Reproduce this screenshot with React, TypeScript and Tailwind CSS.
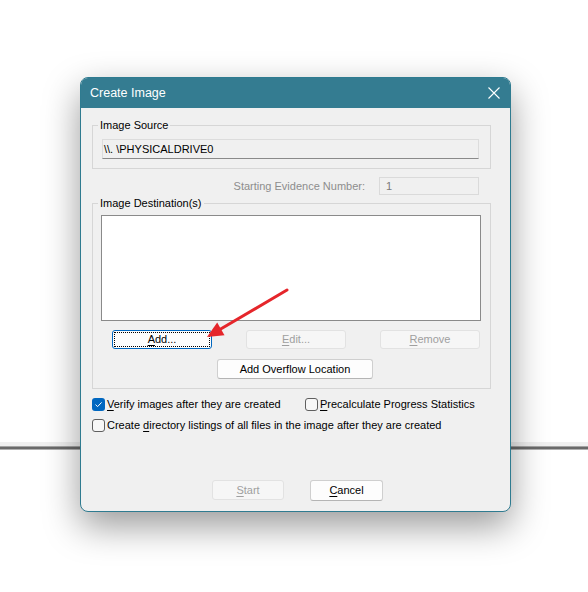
import React from "react";

const font = { fontFamily: '"Liberation Sans", Arial, sans-serif' };

function Mnemonic({ text, index }: { text: string; index: number }) {
  return (
    <>
      {text.slice(0, index)}
      <span className="underline underline-offset-[2px] decoration-[1px]">{text[index]}</span>
      {text.slice(index + 1)}
    </>
  );
}

function Button({
  children,
  disabled,
  focused,
  className = "",
}: {
  children: React.ReactNode;
  disabled?: boolean;
  focused?: boolean;
  className?: string;
}) {
  const base =
    "relative flex items-center justify-center rounded-[3px] border text-[11px] leading-none";
  const look = disabled
    ? "bg-[#f6f6f6] border-[#e2e2e2] text-[#9f9f9f]"
    : focused
    ? "bg-[#fdfdfd] border-[#0067c0] text-black"
    : "bg-[#fdfdfd] border-[#cfcfcf] border-b-[#b4b4b4] text-black";
  return (
    <div className={`${base} ${look} ${className}`}>
      {focused && (
        <div className="absolute inset-[1px] border border-dotted border-black" />
      )}
      <span className="relative">{children}</span>
    </div>
  );
}

function Checkbox({ checked }: { checked?: boolean }) {
  if (checked) {
    return (
      <div className="w-[13px] h-[13px] rounded-[3px] bg-[#0067c0] flex items-center justify-center shrink-0">
        <svg width="9" height="9" viewBox="0 0 9 9">
          <path d="M1.5 4.6 L3.6 6.6 L7.6 2.4" fill="none" stroke="white" strokeWidth="1" />
        </svg>
      </div>
    );
  }
  return (
    <div className="w-[13px] h-[13px] rounded-[3px] border border-[#5f5f5f] bg-[#f7f7f7] shrink-0" />
  );
}

function Dialog() {
  return (
    <div
      className="w-[431px] h-[435px] rounded-[8px] border border-[#2f7b90] bg-[#f0f0f0] overflow-hidden flex flex-col shadow-[0_14px_36px_rgba(0,0,0,0.4)]"
      style={font}
    >
      {/* title bar */}
      <div className="h-[30px] bg-[#347c91] flex items-center justify-between pl-[9px] pr-[10px] text-white text-[12.5px] shrink-0">
        <span>Create Image</span>
        <svg width="12" height="12" viewBox="0 0 12 12">
          <path d="M0.5 0.5 L11.5 11.5 M11.5 0.5 L0.5 11.5" stroke="white" strokeWidth="1.1" />
        </svg>
      </div>

      {/* client area */}
      <div className="flex-1 flex flex-col pl-[11px] text-[11px] leading-[13px] text-black">
        <fieldset className="mt-[11px] w-[399px] border border-[#d6d6d6] pt-[7px] pb-[9px]">
          <legend className="ml-[5px] px-[2px] text-[11px] leading-[13px]">Image Source</legend>
          <div className="ml-[9px] w-[377px] h-[20px] bg-[#f0f0f0] border border-[#dcdcdc] border-b-[#8a8a8a] flex items-center pl-[1px]">
            {"\\\\. \\PHYSICALDRIVE0"}
          </div>
        </fieldset>

        <div className="w-[399px] mt-[8px] flex items-center justify-end pr-[12px] gap-[14px]">
          <span className="text-[#8d8d8d]">Starting Evidence Number:</span>
          <div className="w-[100px] h-[18px] border border-[#dadada] bg-[#f0f0f0] flex items-center pl-[6px] text-[#7a7a7a]">
            1
          </div>
        </div>

        <fieldset className="mt-[2px] w-[399px] border border-[#d6d6d6] pt-[5px] pb-[9px]">
          <legend className="ml-[5px] px-[2px] text-[11px] leading-[13px]">Image Destination(s)</legend>
          <div className="ml-[8px] w-[380px] h-[106px] bg-white border border-[#8a8a8a]" />
          <div className="mt-[9px] flex pl-[19px] gap-[34px]">
            <Button focused className="w-[100px] h-[19px]">
              <Mnemonic text="Add..." index={0} />
            </Button>
            <Button disabled className="w-[100px] h-[19px]">
              <Mnemonic text="Edit..." index={0} />
            </Button>
            <Button disabled className="w-[100px] h-[19px]">
              <Mnemonic text="Remove" index={0} />
            </Button>
          </div>
          <div className="mt-[10px] pl-[124px] flex">
            <Button className="w-[156px] h-[20px]">Add Overflow Location</Button>
          </div>
        </fieldset>

        <div className="mt-[9px] flex items-center">
          <div className="w-[213px] flex items-center gap-[2px]">
            <Checkbox checked />
            <span>
              <Mnemonic text="Verify images after they are created" index={0} />
            </span>
          </div>
          <div className="flex items-center gap-[2px]">
            <Checkbox />
            <span>
              <Mnemonic text="Precalculate Progress Statistics" index={0} />
            </span>
          </div>
        </div>
        <div className="mt-[8px] flex items-center gap-[2px]">
          <Checkbox />
          <span>
            <Mnemonic text="Create directory listings of all files in the image after they are created" index={7} />
          </span>
        </div>

        <div className="mt-auto mb-[10px] flex pl-[120px] gap-[26px]">
          <Button disabled className="w-[72px] h-[20px]">
            <Mnemonic text="Start" index={0} />
          </Button>
          <Button className="w-[73px] h-[21px]">
            <Mnemonic text="Cancel" index={0} />
          </Button>
        </div>
      </div>
    </div>
  );
}

export default function App() {
  return (
    <div className="relative w-[588px] h-[592px] bg-white overflow-hidden">
      {/* window edge running behind the dialog */}
      <div className="absolute left-0 right-0 top-[442px]">
        <div className="h-[4px] bg-[#f0f0f0]" />
        <div className="h-[1px] bg-[#a4a4a4]" />
        <div className="h-[2px] bg-[#6a6a6a]" />
        <div className="h-[1px] bg-[#b0b0b0]" />
      </div>

      <div className="relative pt-[77px] pl-[80px]">
        <Dialog />
      </div>

      {/* annotation arrow pointing at the Add button */}
      <svg className="absolute left-0 top-0" width="588" height="592" viewBox="0 0 588 592">
        <line x1="287" y1="290" x2="219" y2="330" stroke="#e5262b" strokeWidth="3" strokeLinecap="round" />
        <polygon points="207,337 224.5,335.2 217.2,322.6" fill="#e5262b" />
      </svg>
    </div>
  );
}
